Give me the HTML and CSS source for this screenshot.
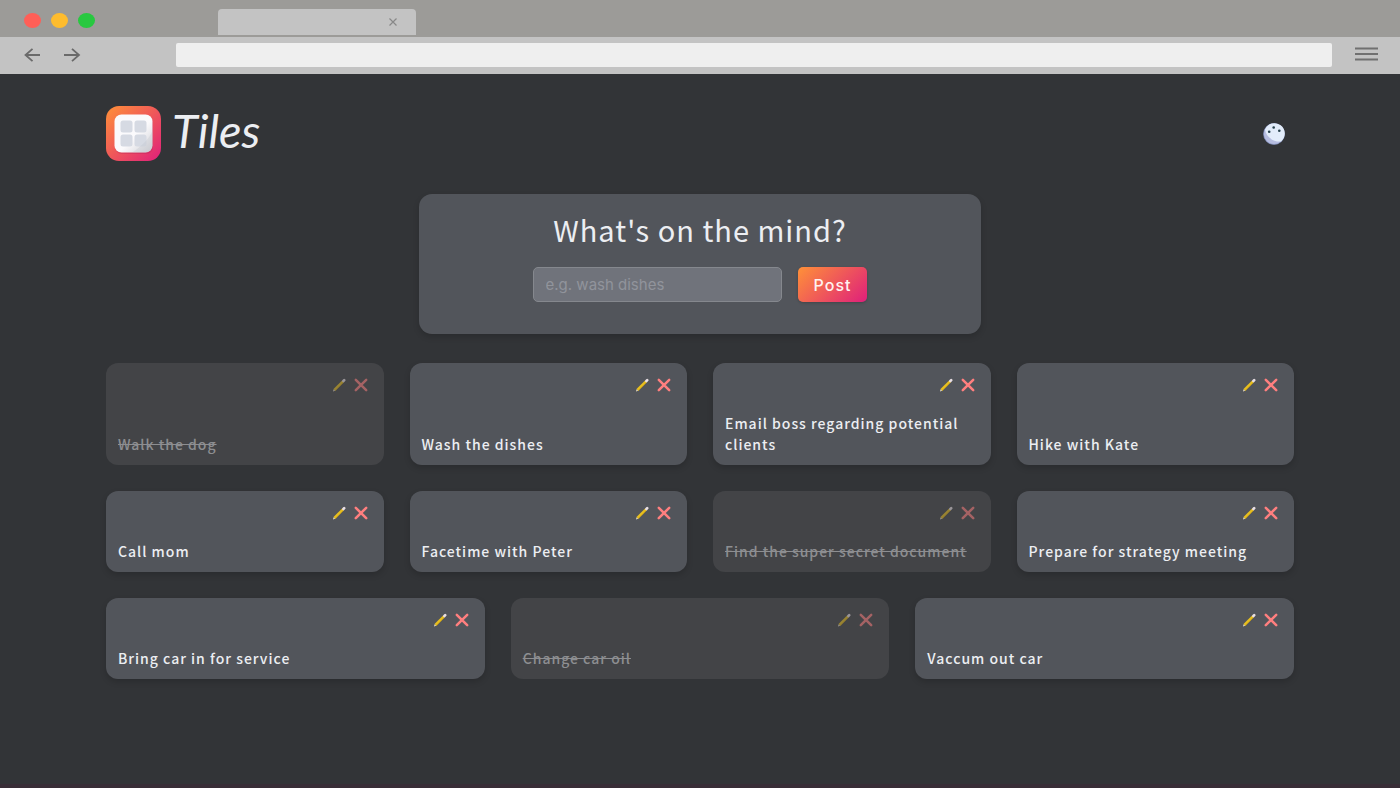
FILE: index.html
```html
<!DOCTYPE html>
<html lang="en">
<head>
<meta charset="utf-8">
<meta name="viewport" content="width=device-width, initial-scale=1">
<title>Tiles</title>
<link rel="stylesheet" href="styles.css">
</head>
<body>
<svg class="defs" aria-hidden="true">
  <symbol id="pencil" viewBox="0 0 14 14">
    <path d="M2.400 12 11 3.400" stroke="#e8c01f" stroke-width="2.600"/>
    <path d="M3 12.800 11.800 4" stroke="#b98d14" stroke-width=".6"/>
    <path d="M11.400 3 12.200 2.200" stroke="#e9dfe4" stroke-width="2.600" stroke-linecap="round"/>
    <path d="M1 13.400 1.600 11.200l1.600 1.600z" fill="#eadfc4"/>
  </symbol>
  <symbol id="cross" viewBox="0 0 14 14">
    <path d="M1.800 1.800 12.200 12.200M12.200 1.800 1.800 12.200" stroke="#ff7f7f" stroke-width="2.500" stroke-linecap="round"/>
  </symbol>
</svg>
<div class="browser">
  <div class="tabbar">
    <div class="lights"><span class="light red"></span><span class="light yellow"></span><span class="light green"></span></div>
    <div class="tab">
      <button class="plain tab-close" aria-label="Close tab"><svg width="8" height="8" viewBox="0 0 8 8"><path d="M.5.5l7 7M7.500.5l-7 7" stroke="#888" stroke-width="1.200"/></svg></button>
    </div>
  </div>
  <div class="toolbar">
    <div class="nav">
      <button class="plain" aria-label="Back"><svg width="17" height="14" viewBox="0 0 17 14"><path d="M16 7H1.500M8.500 .8 1.500 7l7 6.200" fill="none" stroke="#6a6a6a" stroke-width="1.800"/></svg></button>
      <button class="plain" aria-label="Forward"><svg width="17" height="14" viewBox="0 0 17 14"><path d="M0 7h15M8 .8l7 6.200-7 6.200" fill="none" stroke="#6a6a6a" stroke-width="1.800"/></svg></button>
    </div>
    <input class="address" type="text" aria-label="Address">
    <button class="plain" aria-label="Menu"><svg width="24" height="16" viewBox="0 0 24 16"><path d="M0 1.500h23M0 7h23M0 12.500h23" stroke="#707070" stroke-width="2.200"/></svg></button>
  </div>
</div>
<div class="page">
  <header class="header">
    <div class="brand">
      <svg width="55" height="55" viewBox="0 0 55 55" aria-hidden="true">
        <defs>
          <linearGradient id="warm" x1="0" y1="0" x2="1" y2="1"><stop offset="0" stop-color="#ff9138"/><stop offset="1" stop-color="#df1f7b"/></linearGradient>
          <linearGradient id="pale" x1="0" y1="0" x2="1" y2="1"><stop offset=".55" stop-color="#fbfafc"/><stop offset="1" stop-color="#cdced4"/></linearGradient>
        </defs>
        <rect width="55" height="55" rx="13" fill="url(#warm)"/>
        <rect x="9" y="10" width="38" height="38" rx="7" fill="#b52152" opacity=".3"/>
        <rect x="8.500" y="8.500" width="38" height="38" rx="7" fill="url(#pale)"/>
        <g fill="#d6dae3"><rect x="14.500" y="14.500" width="12" height="12" rx="2.500"/><rect x="28.500" y="14.500" width="12" height="12" rx="2.500"/><rect x="14.500" y="28.500" width="12" height="12" rx="2.500"/><rect x="28.500" y="28.500" width="12" height="12" rx="2.500"/></g>
        <path d="M46.500 25v14.500a7 7 0 0 1-7 7H26C33 42 42 35 46.500 25z" fill="#b9bbc2" opacity=".25"/>
      </svg>
      <h1 class="name">Tiles</h1>
    </div>
    <button class="plain" aria-label="Toggle theme"><svg width="22" height="22" viewBox="0 0 22 22">
      <circle cx="11" cy="11" r="10.500" fill="#b6bde0" stroke="#7f91c5" stroke-width=".6"/>
      <path d="M2 6.500A10.300 10.300 0 1 1 18 18.500C9 19 3 13 2 6.500z" fill="#e2ecfa"/>
      <g fill="#27414c"><circle cx="10.700" cy="4.500" r="1.300"/><circle cx="6.200" cy="8.800" r="1.300"/><circle cx="16.300" cy="7.800" r="1.300"/></g>
    </svg></button>
  </header>
  <main>
    <form class="composer">
      <label class="question" for="task">What's on the mind?</label>
      <div class="fields">
        <input class="task" id="task" type="text" placeholder="e.g. wash dishes">
        <button class="post" type="button">Post</button>
      </div>
    </form>
    <ul class="tiles">
      <li class="tile done"><div class="actions"><button class="plain" aria-label="Edit"><svg class="icon"><use href="#pencil"/></svg></button><button class="plain" aria-label="Delete"><svg class="icon"><use href="#cross"/></svg></button></div><p class="text">Walk the dog</p></li>
      <li class="tile"><div class="actions"><button class="plain" aria-label="Edit"><svg class="icon"><use href="#pencil"/></svg></button><button class="plain" aria-label="Delete"><svg class="icon"><use href="#cross"/></svg></button></div><p class="text">Wash the dishes</p></li>
      <li class="tile"><div class="actions"><button class="plain" aria-label="Edit"><svg class="icon"><use href="#pencil"/></svg></button><button class="plain" aria-label="Delete"><svg class="icon"><use href="#cross"/></svg></button></div><p class="text">Email boss regarding potential clients</p></li>
      <li class="tile"><div class="actions"><button class="plain" aria-label="Edit"><svg class="icon"><use href="#pencil"/></svg></button><button class="plain" aria-label="Delete"><svg class="icon"><use href="#cross"/></svg></button></div><p class="text">Hike with Kate</p></li>
      <li class="tile"><div class="actions"><button class="plain" aria-label="Edit"><svg class="icon"><use href="#pencil"/></svg></button><button class="plain" aria-label="Delete"><svg class="icon"><use href="#cross"/></svg></button></div><p class="text">Call mom</p></li>
      <li class="tile"><div class="actions"><button class="plain" aria-label="Edit"><svg class="icon"><use href="#pencil"/></svg></button><button class="plain" aria-label="Delete"><svg class="icon"><use href="#cross"/></svg></button></div><p class="text">Facetime with Peter</p></li>
      <li class="tile done"><div class="actions"><button class="plain" aria-label="Edit"><svg class="icon"><use href="#pencil"/></svg></button><button class="plain" aria-label="Delete"><svg class="icon"><use href="#cross"/></svg></button></div><p class="text">Find the super secret document</p></li>
      <li class="tile"><div class="actions"><button class="plain" aria-label="Edit"><svg class="icon"><use href="#pencil"/></svg></button><button class="plain" aria-label="Delete"><svg class="icon"><use href="#cross"/></svg></button></div><p class="text">Prepare for strategy meeting</p></li>
      <li class="tile"><div class="actions"><button class="plain" aria-label="Edit"><svg class="icon"><use href="#pencil"/></svg></button><button class="plain" aria-label="Delete"><svg class="icon"><use href="#cross"/></svg></button></div><p class="text">Bring car in for service</p></li>
      <li class="tile done"><div class="actions"><button class="plain" aria-label="Edit"><svg class="icon"><use href="#pencil"/></svg></button><button class="plain" aria-label="Delete"><svg class="icon"><use href="#cross"/></svg></button></div><p class="text">Change car oil</p></li>
      <li class="tile"><div class="actions"><button class="plain" aria-label="Edit"><svg class="icon"><use href="#pencil"/></svg></button><button class="plain" aria-label="Delete"><svg class="icon"><use href="#cross"/></svg></button></div><p class="text">Vaccum out car</p></li>
    </ul>
  </main>
</div>
</body>
</html>
```
FILE: styles.css
```css
* { box-sizing: border-box; }

body {
  margin: 0;
  min-height: 100vh;
  display: flex;
  flex-direction: column;
  background: #323437;
  border-bottom: 4px solid #382d36;
  color: #eceef2;
  font-family: "Noto Sans CJK JP", "Noto Sans", sans-serif;
  font-size: 16px;
}

.defs { position: absolute; width: 0; height: 0; }

.plain {
  display: flex;
  padding: 0;
  border: 0;
  background: none;
  cursor: pointer;
}

.tabbar {
  display: flex;
  align-items: flex-end;
  height: 37px;
  padding: 0 24px 2px;
  background: #9c9b98;
}

.lights { display: flex; gap: 10px; width: 194px; padding-bottom: 7px; }
.light { width: 17px; height: 15px; border-radius: 50%; }
.red { background: #ff5f57; }
.yellow { background: #febc2e; }
.green { background: #28c840; }

.tab {
  display: flex;
  align-items: center;
  justify-content: flex-end;
  width: 198px;
  height: 26px;
  padding-right: 19px;
  border-radius: 4px 4px 0 0;
  background: #c3c3c3;
}

.toolbar {
  display: flex;
  align-items: center;
  height: 37px;
  padding: 0 21px 2px 24px;
  background: #c3c3c3;
}

.nav { display: flex; gap: 23px; width: 152px; }

.address {
  flex: 1;
  min-width: 0;
  height: 24px;
  margin-right: 23px;
  padding: 0 8px;
  border: 0;
  border-radius: 2px;
  background: #efefef;
}

.page {
  width: 100%;
  max-width: 1252px;
  margin: 0 auto;
  padding: 32px;
}

.header {
  display: flex;
  align-items: center;
  justify-content: space-between;
  padding-right: 9px;
}

.brand { display: flex; align-items: flex-start; gap: 11px; height: 56px; }

.name {
  margin: 0;
  font-family: Lato, sans-serif;
  font-size: 47px;
  font-style: italic;
  font-weight: 400;
  line-height: 48px;
}

.composer {
  display: flex;
  flex-direction: column;
  align-items: center;
  gap: 18px;
  width: 562px;
  max-width: 100%;
  margin: 32px auto 29px;
  padding: 15px 16px 32px;
  border-radius: 13px;
  background: #52555b;
  box-shadow: 0 3px 6px rgba(0, 0, 0, 0.16);
}

.question { font-size: 29px; line-height: 40px; letter-spacing: 1px; }

.fields { display: flex; gap: 16px; }

.task {
  width: 249px;
  height: 35px;
  padding: 0 12px;
  border: 1px solid #85888e;
  border-radius: 5px;
  background: #70737b;
  color: #eceef2;
  font-family: Inter, sans-serif;
  font-size: 15px;
}

.task::placeholder { color: #91949b; opacity: 1; }

.post {
  height: 35px;
  padding: 0 16px;
  border: 0;
  border-radius: 5px;
  background: linear-gradient(135deg, #ff9138, #df1f7b);
  box-shadow: 0 1px 3px rgba(0, 0, 0, 0.2);
  color: #fff2f0;
  font: 500 16px Inter, sans-serif;
  letter-spacing: 1px;
}

.tiles {
  display: flex;
  flex-wrap: wrap;
  gap: 26px;
  margin: 0;
  padding: 0;
  list-style: none;
}

.tile {
  display: flex;
  flex: 1 1 260px;
  flex-direction: column;
  justify-content: space-between;
  gap: 21px;
  padding: 15px 12px 10px;
  border-radius: 12px;
  background: #52555b;
  box-shadow: 0 3px 6px rgba(0, 0, 0, 0.16);
}

.actions { display: flex; justify-content: flex-end; gap: 8px; padding-right: 4px; }
.icon { width: 14px; height: 14px; }

.text { margin: 0; line-height: 21px; font-size: 14px; font-weight: 500; letter-spacing: 1px; }

.done { background: #434447; box-shadow: none; }
.done .text { color: #8d8e91; text-decoration: line-through; }
.done .icon { opacity: 0.52; }
```
